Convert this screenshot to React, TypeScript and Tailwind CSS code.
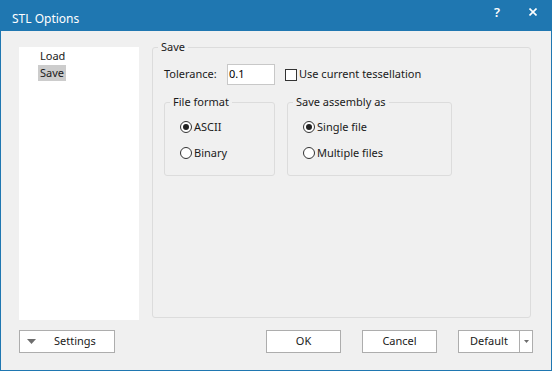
import React from "react";

const font = { fontFamily: '"Noto Sans", "Open Sans", sans-serif' };

function Radio({ checked, label }: { checked?: boolean; label: string }) {
  return (
    <div className="flex items-center h-[16px]">
      <span className="w-[12px] h-[12px] rounded-full border border-[#333] bg-white flex items-center justify-center">
        {checked && <span className="w-[6px] h-[6px] rounded-full bg-[#222]" />}
      </span>
      <span className="ml-[2px] text-[11px] text-[#1a1a1a]">{label}</span>
    </div>
  );
}

function Group({ label, className, children }: { label: string; className: string; children?: React.ReactNode }) {
  return (
    <fieldset className={`border border-[#dcdcdc] rounded-[3px] ${className}`}>
      <legend className="ml-[5px] px-[3px] text-[11px] leading-[14px] text-[#1a1a1a]">{label}</legend>
      {children}
    </fieldset>
  );
}

function Btn({ children, className }: { children: React.ReactNode; className: string }) {
  return (
    <div className={`h-[23px] bg-white border border-[#adadad] flex items-center justify-center text-[11px] text-[#1a1a1a] ${className}`}>
      {children}
    </div>
  );
}

export default function App() {
  return (
    <div className="w-[552px] h-[371px] flex flex-col bg-[#f0f0f0]" style={font}>
      <div className="h-[31px] bg-[#1f77b1] flex text-white">
        <div className="pl-[12px] pt-[11px] text-[12px] leading-[16px]">STL Options</div>
        <div className="ml-auto flex pt-[4px] text-[13px] leading-[16px]">
          <span className="w-[20px] text-center mr-[16px] font-semibold">?</span>
          <span className="w-[20px] mr-[9px] flex justify-center pt-[4px]">
            <svg width="8" height="8" viewBox="0 0 8 8">
              <path d="M0.5 0.5L7.5 7.5M7.5 0.5L0.5 7.5" stroke="white" strokeWidth="1.6" />
            </svg>
          </span>
        </div>
      </div>
      <div className="flex-1 border-x border-b border-[#1f77b1] flex flex-col">
        <div className="flex pt-[16px]">
          <div className="ml-[18px] w-[120px] h-[273px] bg-white pt-[1px] flex flex-col">
            <div className="pl-[21px] h-[16px] text-[11px] leading-[16px] text-[#1a1a1a]">Load</div>
            <div className="pl-[19px] mt-[1px] h-[16px] flex">
              <span className="bg-[#cccccc] px-[2px] h-[16px] text-[11px] leading-[16px] text-[#1a1a1a]">Save</span>
            </div>
          </div>
          <Group label="Save" className="ml-[13px] w-[379px] h-[278px] -mt-[7px]">
            <div className="pl-[11px]">
              <div className="flex items-center mt-[10px] h-[21px]">
                <span className="text-[11px] text-[#1a1a1a] w-[63px]">Tolerance:</span>
                <div className="w-[48px] h-[21px] bg-white border border-[#c8c8c8] text-[11px] pl-[1px] leading-[17px]">0.1</div>
                <span className="ml-[10px] w-[12px] h-[12px] border border-[#333] bg-white" />
                <span className="ml-[2px] text-[11px] text-[#1a1a1a]">Use current tessellation</span>
              </div>
              <div className="flex mt-[10px]">
                <Group label="File format" className="w-[111px] h-[81px]">
                  <div className="flex flex-col gap-[10px] pl-[15px] pt-[10px]">
                    <Radio checked label="ASCII" />
                    <Radio label="Binary" />
                  </div>
                </Group>
                <Group label="Save assembly as" className="ml-[12px] w-[165px] h-[81px]">
                  <div className="flex flex-col gap-[10px] pl-[15px] pt-[10px]">
                    <Radio checked label="Single file" />
                    <Radio label="Multiple files" />
                  </div>
                </Group>
              </div>
            </div>
          </Group>
        </div>
        <div className="flex mt-[10px]">
          <Btn className="ml-[18px] w-[96px] justify-start">
            <svg width="9" height="5" viewBox="0 0 9 5" className="ml-[7px]">
              <path d="M0 0H9L4.5 5Z" fill="#6d6d6d" />
            </svg>
            <span className="ml-[18px]">Settings</span>
          </Btn>
          <div className="ml-auto mr-[18px] flex gap-[21px]">
            <Btn className="w-[75px]">OK</Btn>
            <Btn className="w-[75px]">Cancel</Btn>
            <div className="w-[75px] h-[23px] bg-white border border-[#adadad] flex text-[11px] text-[#1a1a1a]">
              <div className="flex-1 flex items-center justify-center border-r border-[#adadad]">Default</div>
              <div className="w-[12px] flex items-center justify-center">
                <svg width="5" height="3" viewBox="0 0 5 3"><path d="M0 0H5L2.5 3Z" fill="#6d6d6d" /></svg>
              </div>
            </div>
          </div>
        </div>
      </div>
    </div>
  );
}
